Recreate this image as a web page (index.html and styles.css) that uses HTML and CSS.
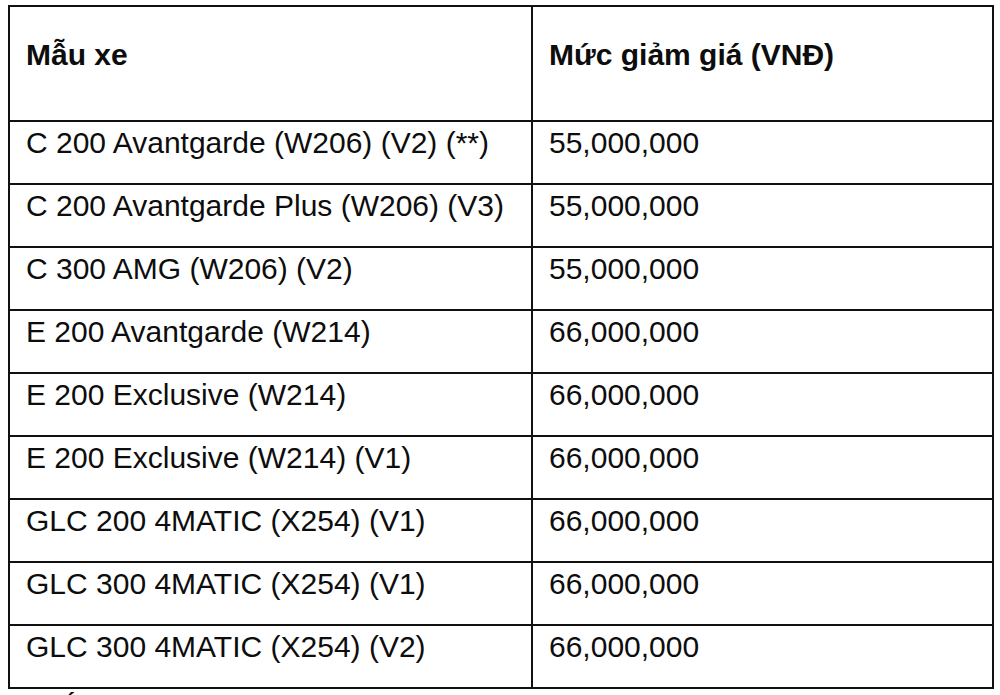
FILE: index.html
```html
<!DOCTYPE html>
<html lang="vi">
<head>
<meta charset="utf-8">
<link rel="stylesheet" href="styles.css">
</head>
<body>
<div class="page">
  <table class="price-table">
    <thead>
      <tr class="head-row">
        <th class="col-model">Mẫu xe</th>
        <th class="col-price">Mức giảm giá (VNĐ)</th>
      </tr>
    </thead>
    <tbody>
      <tr><td>C 200 Avantgarde (W206) (V2) (**)</td><td>55,000,000</td></tr>
      <tr><td>C 200 Avantgarde Plus (W206) (V3)</td><td>55,000,000</td></tr>
      <tr><td>C 300 AMG (W206) (V2)</td><td>55,000,000</td></tr>
      <tr><td>E 200 Avantgarde (W214)</td><td>66,000,000</td></tr>
      <tr><td>E 200 Exclusive (W214)</td><td>66,000,000</td></tr>
      <tr><td>E 200 Exclusive (W214) (V1)</td><td>66,000,000</td></tr>
      <tr><td>GLC 200 4MATIC (X254) (V1)</td><td>66,000,000</td></tr>
      <tr><td>GLC 300 4MATIC (X254) (V1)</td><td>66,000,000</td></tr>
      <tr><td>GLC 300 4MATIC (X254) (V2)</td><td>66,000,000</td></tr>
    </tbody>
  </table>
  <p class="note">(**) Áp dụng cho xe sản xuất năm 2024, số lượng có hạn và tùy theo từng đại lý.</p>
</div>
</body>
</html>
```

FILE: styles.css
```css
html, body {
  margin: 0;
  padding: 0;
  background: #ffffff;
}

.page {
  padding: 5px 0 0 8px;
  font-family: "Liberation Sans", Arial, sans-serif;
  color: #0d0d0d;
}

.price-table {
  border-collapse: collapse;
  width: 986px;
  table-layout: fixed;
}

.price-table th,
.price-table td {
  border: 2px solid #111111;
  font-size: 30px;
  line-height: 34px;
  text-align: left;
  vertical-align: top;
  padding: 4px 16px 0 16px;
}

.col-model {
  width: 523px;
}

.head-row th {
  height: 115px;
  box-sizing: border-box;
  padding-top: 31px;
  font-weight: bold;
}

.price-table tbody tr {
  height: 63px;
}

.price-table td {
  height: 63px;
  box-sizing: border-box;
}

.note {
  margin: 2px 0 0 0;
  font-size: 30px;
  line-height: 34px;
}
```
